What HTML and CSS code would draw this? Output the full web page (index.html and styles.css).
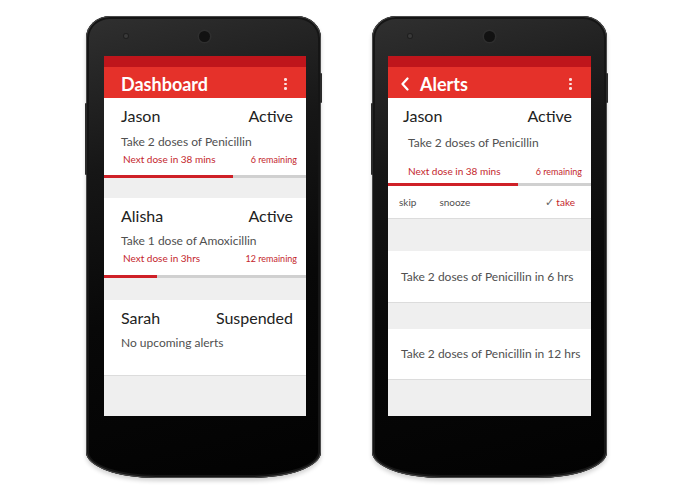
FILE: index.html
```html
<!DOCTYPE html>
<html lang="en">
<head>
<meta charset="utf-8">
<title>Medication reminders</title>
<link rel="stylesheet" href="styles.css">
</head>
<body>
<div class="stage">
  <div class="phone phone--one">
    <div class="bezel-top"><span class="sensor"></span><span class="camera"></span></div>
    <div class="screen">
      <div class="statusbar"></div>
      <div class="toolbar">
        <h1 class="title">Dashboard</h1>
        <span class="kebab"><i></i><i></i><i></i></span>
      </div>
      <div class="content">
        <div class="card">
          <div class="card-head"><span>Jason</span><span>Active</span></div>
          <div class="card-desc">Take 2 doses of Penicillin</div>
          <div class="card-meta"><span>Next dose in 38 mins</span><span class="meta-right">6 remaining</span></div>
          <div class="progress"><div class="progress-fill" style="width:64%"></div></div>
        </div>
        <div class="card card--gap20">
          <div class="card-head"><span>Alisha</span><span>Active</span></div>
          <div class="card-desc">Take 1 dose of Amoxicillin</div>
          <div class="card-meta"><span>Next dose in 3hrs</span><span class="meta-right">12 remaining</span></div>
          <div class="progress"><div class="progress-fill" style="width:26%"></div></div>
        </div>
        <div class="card card--plain card--gap23">
          <div class="card-head"><span>Sarah</span><span>Suspended</span></div>
          <div class="card-desc">No upcoming alerts</div>
        </div>
      </div>
    </div>
  </div>

  <div class="phone phone--two">
    <div class="bezel-top"><span class="sensor"></span><span class="camera"></span></div>
    <div class="screen">
      <div class="statusbar"></div>
      <div class="toolbar toolbar--back">
        <svg class="back" width="10" height="14" viewBox="0 0 10 14"><path d="M7.5 1.5 L2.5 7 L7.5 12.5" fill="none" stroke="#fff" stroke-width="2.2" stroke-linecap="round" stroke-linejoin="round"/></svg>
        <h1 class="title">Alerts</h1>
        <span class="kebab"><i></i><i></i><i></i></span>
      </div>
      <div class="content">
        <div class="card card--alert">
          <div class="card-head"><span>Jason</span><span>Active</span></div>
          <div class="card-desc">Take 2 doses of Penicillin</div>
          <div class="card-meta"><span>Next dose in 38 mins</span><span class="meta-right">6 remaining</span></div>
          <div class="progress"><div class="progress-fill" style="width:64%"></div></div>
          <div class="actions">
            <span class="action">skip</span>
            <span class="action">snooze</span>
            <span class="action action--take"><span class="check">✓</span>take</span>
          </div>
        </div>
        <div class="alert-row alert-row--first">Take 2 doses of Penicillin in 6 hrs</div>
        <div class="alert-row alert-row--second">Take 2 doses of Penicillin in 12 hrs</div>
      </div>
    </div>
  </div>
</div>
</body>
</html>
```

FILE: styles.css
```css
* { box-sizing: border-box; }

html, body {
  margin: 0;
  padding: 0;
  background: #ffffff;
  font-family: Lato, "Open Sans", "Liberation Sans", sans-serif;
}

.stage {
  display: flex;
  gap: 51px;
  padding: 16px 0 0 86px;
  width: 695px;
  height: 494px;
}

.phone {
  position: relative;
  width: 235px;
  height: 462px;
  border-radius: 24px 24px 70px 70px / 22px 22px 26px 26px;
  background: linear-gradient(165deg, #303030 0%, #161616 30%, #080808 60%, #020202 100%);
  box-shadow: inset 0 0 0 1px #4a4a4a, inset 0 0 0 3px #151515, 0 3px 4px rgba(0,0,0,0.18);
}

.phone::before,
.phone::after {
  content: "";
  position: absolute;
  width: 2px;
  background: #2a2a2a;
  border-radius: 1px;
}

.phone::before {
  right: -1px;
  top: 57px;
  height: 30px;
}

.phone::after {
  left: -1px;
  top: 87px;
  height: 72px;
}

.phone--one { padding-left: 18px; }
.phone--two { padding-left: 16px; }

.bezel-top {
  height: 40px;
  display: flex;
  align-items: center;
  padding-left: 20px;
}

.sensor {
  width: 4px;
  height: 4px;
  border-radius: 50%;
  background: #3a3a3a;
  box-shadow: 0 0 0 1px #1f1f1f;
}

.camera {
  width: 11px;
  height: 11px;
  margin-left: 71px;
  border-radius: 50%;
  background: #121212;
  box-shadow: 0 0 0 1.5px #2e2e2e;
}

.phone--two .camera { margin-left: 72px; }

.screen {
  width: 202px;
  height: 360px;
  background: #efefef;
  overflow: hidden;
  display: flex;
  flex-direction: column;
}

.phone--two .screen { width: 203px; }

.statusbar {
  height: 11px;
  background: #bf151b;
  flex: none;
}

.toolbar {
  height: 31px;
  flex: none;
  background: #e5312a;
  display: flex;
  align-items: center;
  padding: 3px 0 0 17px;
}

.toolbar--back { padding-left: 12px; }

.back {
  display: block;
  margin-right: 10px;
}

.title {
  margin: 0;
  font-size: 18px;
  line-height: 1;
  font-weight: 700;
  color: #ffffff;
}

.kebab {
  margin-left: auto;
  margin-right: 19px;
  display: flex;
  flex-direction: column;
  gap: 2px;
}

.kebab i {
  display: block;
  width: 2.6px;
  height: 2.6px;
  border-radius: 50%;
  background: #fbe3e2;
}

.content {
  display: flex;
  flex-direction: column;
}

.card {
  background: #ffffff;
}

.card--gap20 { margin-top: 19.5px; }
.card--gap23 { margin-top: 22px; }

.card--plain {
  height: 76px;
  border-bottom: 1px solid #dcdcdc;
}

.card-head {
  display: flex;
  justify-content: space-between;
  padding: 8px 13px 0 17px;
  font-size: 16px;
  line-height: 20px;
  color: #222222;
}

.card-desc {
  margin-top: 7.5px;
  padding-left: 17px;
  font-size: 12px;
  line-height: 16px;
  color: #505050;
}

.card-meta {
  display: flex;
  justify-content: space-between;
  align-items: baseline;
  padding: 2px 9px 0 19px;
  font-size: 10px;
  line-height: 14px;
  color: #c4262c;
}

.meta-right { font-size: 9px; }

.progress {
  height: 3px;
  margin-top: 8.5px;
  background: #d0d0d0;
}

.progress-fill {
  height: 100%;
  background: #cf2027;
}

.card--alert {
  border-bottom: 1px solid #dcdcdc;
}

.card--alert .card-head { padding: 8px 19px 0 15px; }
.card--alert .card-desc { padding-left: 20px; margin-top: 8.5px; }
.card--alert .card-meta { padding: 13px 9px 0 20px; }
.card--alert .progress { margin-top: 4px; }

.actions {
  display: flex;
  align-items: center;
  height: 32px;
  padding: 0 16px 0 11px;
  font-size: 10px;
  color: #505050;
}

.action + .action { margin-left: 23px; }

.action--take {
  margin-left: auto !important;
  color: #c4262c;
}

.check {
  color: #666666;
  font-size: 11px;
  margin-right: 2px;
}

.alert-row {
  background: #ffffff;
  height: 52px;
  display: flex;
  align-items: center;
  padding-left: 13px;
  font-size: 12px;
  color: #505050;
  border-bottom: 1px solid #dcdcdc;
}

.alert-row--first { margin-top: 32px; }
.alert-row--second { margin-top: 26px; height: 51px; }
```
